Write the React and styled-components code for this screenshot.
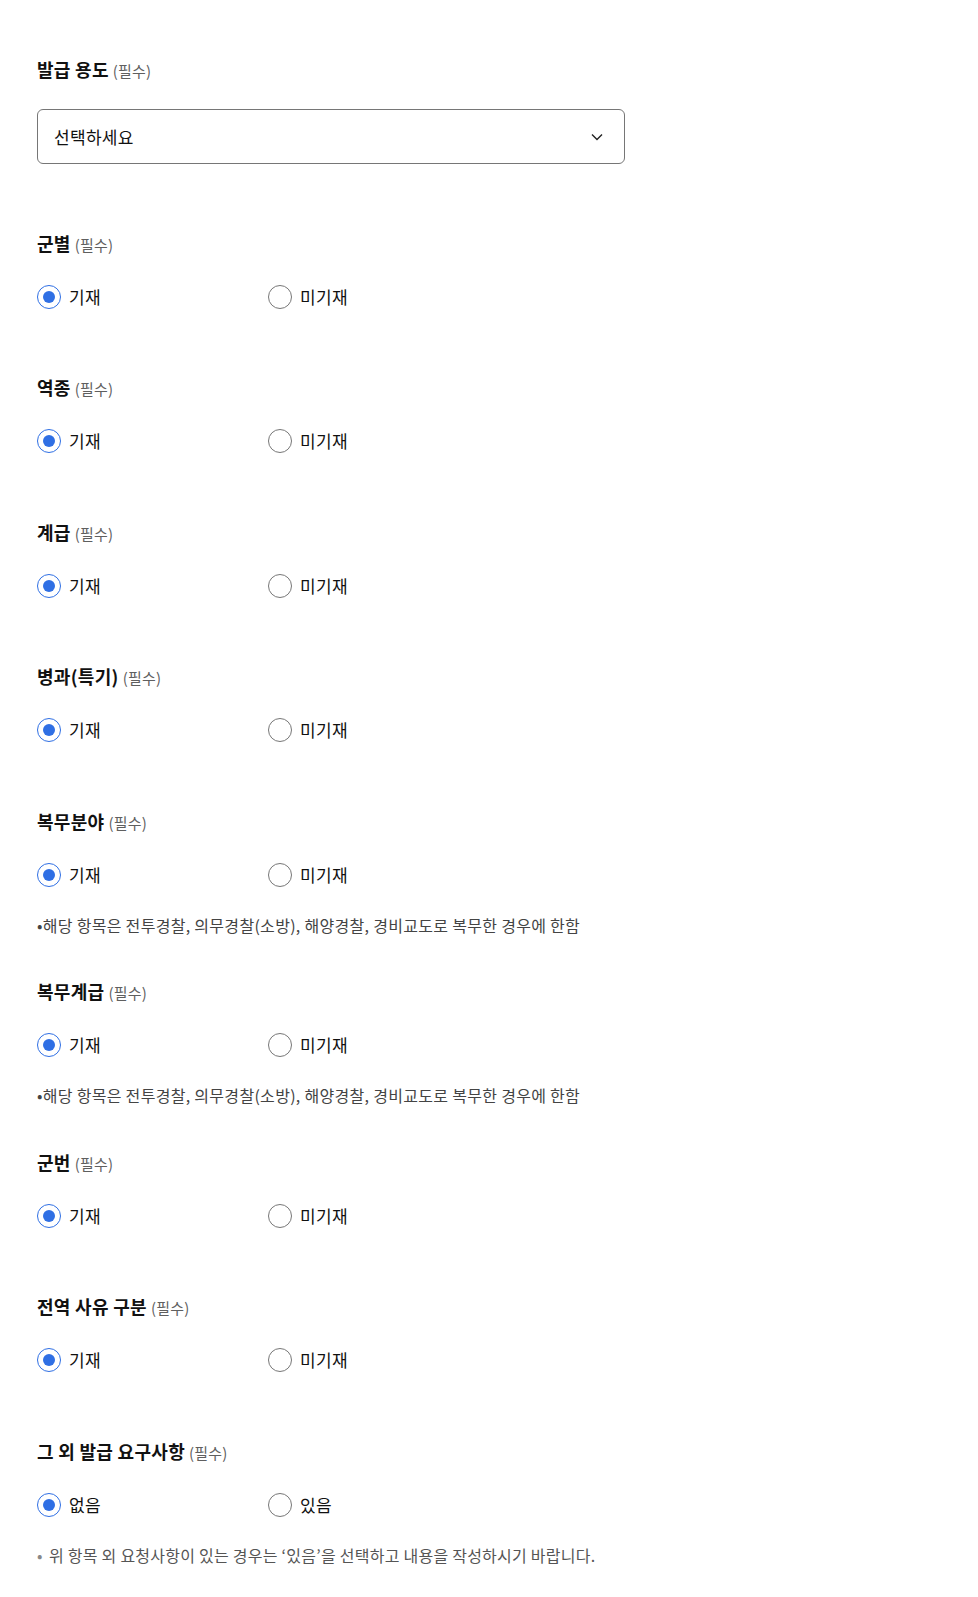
import React, { useState } from 'react';
import styled, { createGlobalStyle } from 'styled-components';

const GlobalStyle = createGlobalStyle`
    html, body {
        margin: 0;
        padding: 0;
        background: #fff;
    }
    body {
        font-family: "Noto Sans CJK KR", "Noto Sans", sans-serif;
        color: #111;
    }
    * {
        box-sizing: border-box;
    }
`;

const fields = [
    { key: 'branch', title: '군별' },
    { key: 'type', title: '역종' },
    { key: 'rank', title: '계급' },
    { key: 'specialty', title: '병과(특기)' },
    { key: 'area', title: '복무분야', note: '해당 항목은 전투경찰, 의무경찰(소방), 해양경찰, 경비교도로 복무한 경우에 한함' },
    { key: 'serviceRank', title: '복무계급', note: '해당 항목은 전투경찰, 의무경찰(소방), 해양경찰, 경비교도로 복무한 경우에 한함' },
    { key: 'number', title: '군번' },
    { key: 'reason', title: '전역 사유 구분' },
];

const App = () => {
    const initial = {};
    fields.forEach((f) => { initial[f.key] = 'yes'; });
    initial.extra = 'none';
    const [values, setValues] = useState(initial);

    const pick = (key, v) => setValues((prev) => ({ ...prev, [key]: v }));

    return (
        <StyledForm>
            <GlobalStyle />

            <Field>
                <Title>발급 용도<Required>(필수)</Required></Title>
                <SelectBox>
                    <span>선택하세요</span>
                    <svg width="12" height="8" viewBox="0 0 12 8" fill="none">
                        <path d="M1 1.5L6 6.5L11 1.5" stroke="#222" strokeWidth="1.4" />
                    </svg>
                </SelectBox>
            </Field>

            {fields.map((f) => (
                <Field key={f.key} $withNote={!!f.note}>
                    <Title>{f.title}<Required>(필수)</Required></Title>
                    <Options>
                        <Option>
                            <Radio type="radio" name={f.key} checked={values[f.key] === 'yes'} onChange={() => pick(f.key, 'yes')} />
                            기재
                        </Option>
                        <Option>
                            <Radio type="radio" name={f.key} checked={values[f.key] === 'no'} onChange={() => pick(f.key, 'no')} />
                            미기재
                        </Option>
                    </Options>
                    {f.note && <Note>•{f.note}</Note>}
                </Field>
            ))}

            <Field>
                <Title>그 외 발급 요구사항<Required>(필수)</Required></Title>
                <Options>
                    <Option>
                        <Radio type="radio" name="extra" checked={values.extra === 'none'} onChange={() => pick('extra', 'none')} />
                        없음
                    </Option>
                    <Option>
                        <Radio type="radio" name="extra" checked={values.extra === 'some'} onChange={() => pick('extra', 'some')} />
                        있음
                    </Option>
                </Options>
                <Guide>위 항목 외 요청사항이 있는 경우는 ‘있음’을 선택하고 내용을 작성하시기 바랍니다.</Guide>
            </Field>
        </StyledForm>
    );
};

const StyledForm = styled.form`
    display: flex;
    flex-direction: column;
    padding: 57px 37px 20px;
    width: 978px;
`;

const Field = styled.div`
    display: flex;
    flex-direction: column;
    margin-bottom: ${(p) => (p.$withNote ? '43.5px' : '66.5px')};

    &:last-child {
        margin-bottom: 0;
    }
`;

const Title = styled.h3`
    display: flex;
    align-items: baseline;
    gap: 4px;
    height: 24px;
    margin: 0 0 29px;
    font-size: 18px;
    line-height: 24px;
    font-weight: 700;
    letter-spacing: 0.3px;
    color: #111;
`;

const Required = styled.span`
    font-size: 15px;
    line-height: 24px;
    font-weight: 400;
    letter-spacing: 0.2px;
    color: #5f5f5f;
`;

const SelectBox = styled.div`
    display: flex;
    align-items: center;
    justify-content: space-between;
    width: 588px;
    height: 55px;
    margin-top: -1px;
    padding: 0 21px 0 16px;
    border: 1px solid #767676;
    border-radius: 6px;
    font-size: 17px;
    letter-spacing: 0.3px;
    color: #111;
`;

const Options = styled.div`
    display: grid;
    grid-template-columns: 231px 231px;
    margin-top: 1px;
`;

const Option = styled.label`
    display: flex;
    align-items: center;
    gap: 8px;
    height: 24px;
    font-size: 17px;
    line-height: 24px;
    letter-spacing: 0.3px;
    color: #111;
    cursor: pointer;
`;

const Radio = styled.input`
    appearance: none;
    flex: none;
    margin: 0;
    width: 24px;
    height: 24px;
    border-radius: 50%;
    border: 1px solid #777;
    background: #fff;
    display: grid;
    place-items: center;
    cursor: pointer;

    &::after {
        content: '';
        width: 12px;
        height: 12px;
        border-radius: 50%;
        background: transparent;
    }

    &:checked {
        border: 1.5px solid #2f6fe4;
    }

    &:checked::after {
        background: #2f6fe4;
    }
`;

const Note = styled.p`
    margin: 27px 0 0;
    font-size: 16px;
    line-height: 22px;
    letter-spacing: 0.3px;
    color: #444;
`;

const Guide = styled.p`
    position: relative;
    margin: 26px 0 0;
    padding-left: 12px;
    font-size: 16px;
    line-height: 24px;
    letter-spacing: 0.25px;
    color: #555;

    &::before {
        content: '•';
        position: absolute;
        left: 0;
        color: #888;
    }
`;

export default App;
